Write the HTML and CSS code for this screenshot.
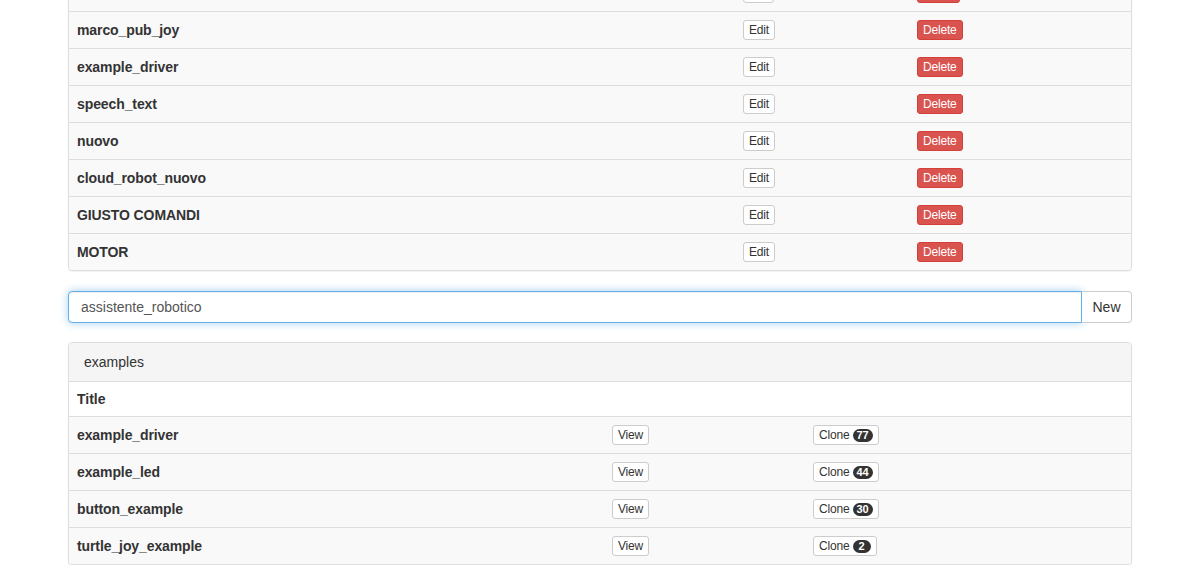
FILE: index.html
```html
<!DOCTYPE html>
<html>
<head>
  <meta charset="UTF-8">
  <title>Programs</title>
  <link rel="stylesheet" href="styles.css">
</head>
<body>
  <div class="page">
    <!-- my programs -->
    <div class="panel panel-mine">
      <table class="table table-mine">
        <tr class="row-hidden">
          <td class="col-name"></td>
          <td class="col-edit"><button class="btn btn-default btn-blank-edit"></button></td>
          <td class="col-del"><button class="btn btn-danger btn-blank-del"></button></td>
        </tr>
        <tr>
          <td class="col-name">marco_pub_joy</td>
          <td class="col-edit"><button class="btn btn-default">Edit</button></td>
          <td class="col-del"><button class="btn btn-danger">Delete</button></td>
        </tr>
        <tr>
          <td class="col-name">example_driver</td>
          <td class="col-edit"><button class="btn btn-default">Edit</button></td>
          <td class="col-del"><button class="btn btn-danger">Delete</button></td>
        </tr>
        <tr>
          <td class="col-name">speech_text</td>
          <td class="col-edit"><button class="btn btn-default">Edit</button></td>
          <td class="col-del"><button class="btn btn-danger">Delete</button></td>
        </tr>
        <tr>
          <td class="col-name">nuovo</td>
          <td class="col-edit"><button class="btn btn-default">Edit</button></td>
          <td class="col-del"><button class="btn btn-danger">Delete</button></td>
        </tr>
        <tr>
          <td class="col-name">cloud_robot_nuovo</td>
          <td class="col-edit"><button class="btn btn-default">Edit</button></td>
          <td class="col-del"><button class="btn btn-danger">Delete</button></td>
        </tr>
        <tr>
          <td class="col-name">GIUSTO COMANDI</td>
          <td class="col-edit"><button class="btn btn-default">Edit</button></td>
          <td class="col-del"><button class="btn btn-danger">Delete</button></td>
        </tr>
        <tr>
          <td class="col-name">MOTOR</td>
          <td class="col-edit"><button class="btn btn-default">Edit</button></td>
          <td class="col-del"><button class="btn btn-danger">Delete</button></td>
        </tr>
      </table>
    </div>

    <!-- new program -->
    <div class="input-group">
      <input type="text" class="form-control" value="assistente_robotico">
      <button class="btn-new">New</button>
    </div>

    <!-- examples -->
    <div class="panel panel-examples">
      <div class="panel-heading">examples</div>
      <table class="table table-examples">
        <thead>
          <tr><th class="col-title">Title</th><th class="col-view"></th><th></th></tr>
        </thead>
        <tbody>
          <tr>
            <td>example_driver</td>
            <td><button class="btn btn-default">View</button></td>
            <td><button class="btn btn-default">Clone <span class="badge">77</span></button></td>
          </tr>
          <tr>
            <td>example_led</td>
            <td><button class="btn btn-default">View</button></td>
            <td><button class="btn btn-default">Clone <span class="badge">44</span></button></td>
          </tr>
          <tr>
            <td>button_example</td>
            <td><button class="btn btn-default">View</button></td>
            <td><button class="btn btn-default">Clone <span class="badge">30</span></button></td>
          </tr>
          <tr>
            <td>turtle_joy_example</td>
            <td><button class="btn btn-default">View</button></td>
            <td><button class="btn btn-default">Clone <span class="badge">2</span></button></td>
          </tr>
        </tbody>
      </table>
    </div>
  </div>
</body>
</html>
```

FILE: styles.css
```css
body {
  margin: 0;
  padding: 0;
  font-family: "Liberation Sans", Arial, sans-serif;
  font-size: 14px;
  line-height: 20px;
  color: #333;
  background-color: #fff;
  overflow: hidden;
}

.page {
  margin: 0 68px;
}

/* 面板 */
.panel {
  border: 1px solid #ddd;
  border-radius: 4px;
  background-color: #fff;
  overflow: hidden;
  box-shadow: 0 1px 1px rgba(0, 0, 0, 0.05);
}

.panel-mine {
  margin-top: -26px;
  border-top-left-radius: 0;
  border-top-right-radius: 0;
}

.panel-heading {
  padding: 9px 15px;
  background-color: #f5f5f5;
  border-bottom: 1px solid #ddd;
}

/* 表格 */
.table {
  width: 100%;
  border-collapse: collapse;
  table-layout: fixed;
}

.table td {
  padding: 8px;
  height: 20px;
  background-color: #f9f9f9;
  border-top: 1px solid #ddd;
  font-weight: bold;
  letter-spacing: -0.1px;
  vertical-align: top;
}

.table-mine tr:first-child td {
  border-top: none;
}

.table th {
  padding: 7px 8px;
  text-align: left;
  font-weight: bold;
  background-color: #fff;
  border-bottom: 1px solid #ddd;
}

.table-mine .col-name {
  width: 650px;
}

.table-mine .col-edit {
  width: 158px;
}

.table-examples .col-title {
  width: 519px;
}

.table-examples .col-view {
  width: 185px;
}

/* 按钮 */
.btn {
  display: inline-block;
  height: 20px;
  padding: 1px 5px;
  font-family: inherit;
  font-size: 12px;
  line-height: 16px;
  font-weight: normal;
  letter-spacing: -0.2px;
  border: 1px solid #ccc;
  border-radius: 3px;
  box-sizing: border-box;
  vertical-align: top;
  cursor: pointer;
}

.btn-default {
  background-color: #fff;
  color: #333;
}

.btn-danger {
  background-color: #d9534f;
  border-color: #d43f3a;
  color: #fff;
}

.btn-blank-edit {
  width: 31px;
}

.btn-blank-del {
  width: 43px;
}

.badge {
  display: inline-block;
  min-width: 10px;
  padding: 0 4px;
  font-size: 11px;
  font-weight: bold;
  line-height: 13px;
  color: #fff;
  background-color: #333;
  border-radius: 7px;
  text-align: center;
  letter-spacing: 0;
  vertical-align: 0;
}

/* 输入区域 */
.input-group {
  display: flex;
  margin: 20px 0 19px;
}

.form-control {
  flex: 1;
  height: 32px;
  padding: 6px 12px;
  font-family: inherit;
  font-size: 14px;
  color: #555;
  border: 1px solid #66afe9;
  border-radius: 4px 0 0 4px;
  box-sizing: border-box;
  outline: none;
  box-shadow: inset 0 1px 1px rgba(0, 0, 0, 0.075), 0 0 8px rgba(102, 175, 233, 0.6);
}

.btn-new {
  width: 50px;
  height: 32px;
  padding: 6px 10px;
  font-family: inherit;
  font-size: 14px;
  color: #333;
  background-color: #fff;
  border: 1px solid #ccc;
  border-left: none;
  border-radius: 0 4px 4px 0;
  box-sizing: border-box;
  cursor: pointer;
}
```
